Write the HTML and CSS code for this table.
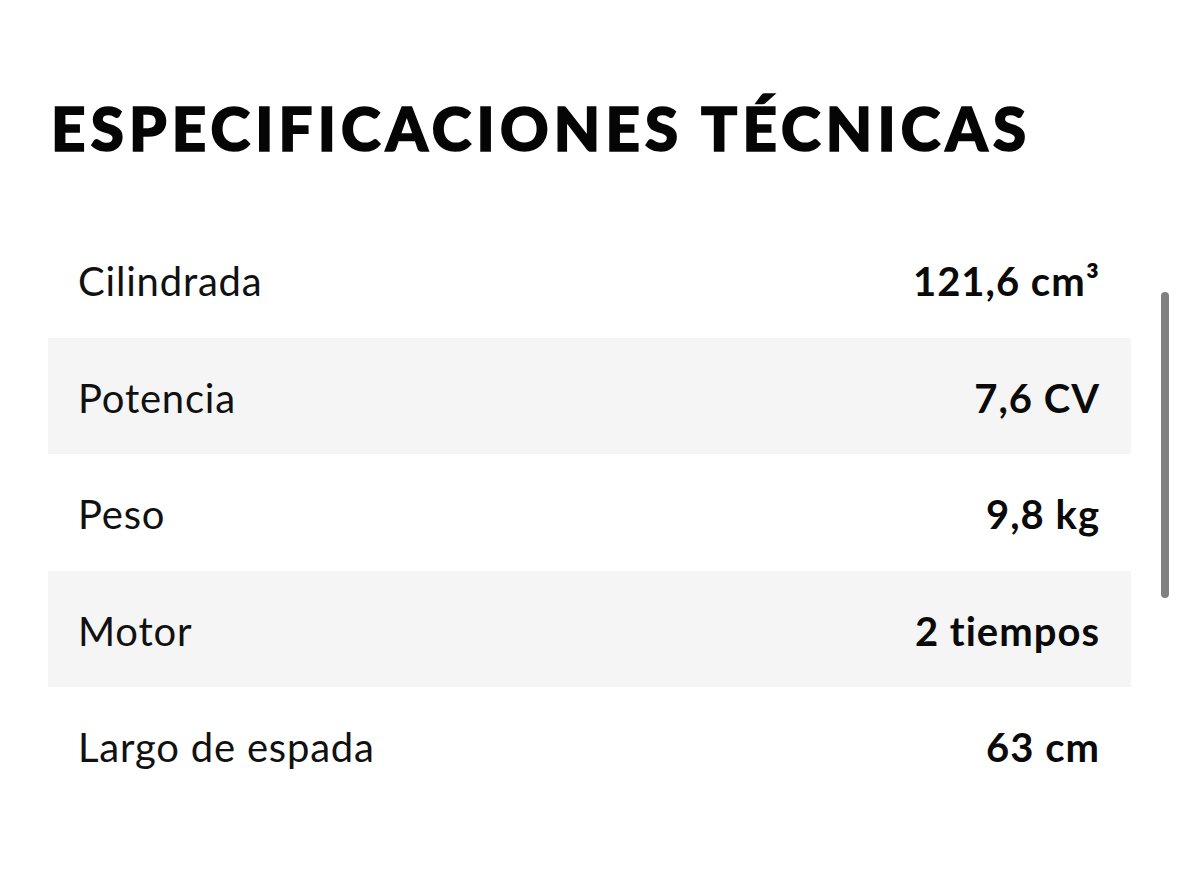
FILE: index.html
```html
<!DOCTYPE html>
<html lang="es">
<head>
<meta charset="utf-8">
<title>Especificaciones técnicas</title>
<link rel="stylesheet" href="styles.css">
</head>
<body>
<main class="page">
  <h1 class="title">ESPECIFICACIONES TÉCNICAS</h1>
  <div class="specs">
    <div class="row"><span class="label">Cilindrada</span><span class="value">121,6 cm³</span></div>
    <div class="row alt"><span class="label">Potencia</span><span class="value">7,6 CV</span></div>
    <div class="row"><span class="label">Peso</span><span class="value">9,8 kg</span></div>
    <div class="row alt"><span class="label">Motor</span><span class="value">2 tiempos</span></div>
    <div class="row"><span class="label">Largo de espada</span><span class="value">63 cm</span></div>
  </div>
</main>
<div class="scrollbar"></div>
</body>
</html>
```
FILE: styles.css
```css
html, body {
  margin: 0;
  padding: 0;
  background: #ffffff;
  color: #0a0a0a;
  font-family: "Lato", "Noto Sans", sans-serif;
}
.page {
  padding: 0 48px 0 48px;
  width: 1083px;
}
.title {
  margin: 0;
  padding: 98px 0 0 3px;
  font-size: 60px;
  line-height: 60px;
  font-weight: 900;
  letter-spacing: 5.2px;
  -webkit-text-stroke: 1.6px #050505;
  height: 123px;
  color: #050505;
}
.specs {
  display: flex;
  flex-direction: column;
}
.row {
  height: 116.5px;
  display: flex;
  align-items: center;
  justify-content: space-between;
  padding: 4px 31px 0 30px;
  box-sizing: border-box;
}
.row.alt {
  background: #f5f5f5;
}
.label {
  font-size: 40px;
  font-weight: 400;
  letter-spacing: 0.8px;
  color: #111;
}
.value {
  font-size: 40px;
  font-weight: 700;
  letter-spacing: 1px;
  color: #0a0a0a;
}
.scrollbar {
  position: absolute;
  left: 1161px;
  top: 292px;
  width: 8px;
  height: 306px;
  border-radius: 4px;
  background: #808080;
}
```
